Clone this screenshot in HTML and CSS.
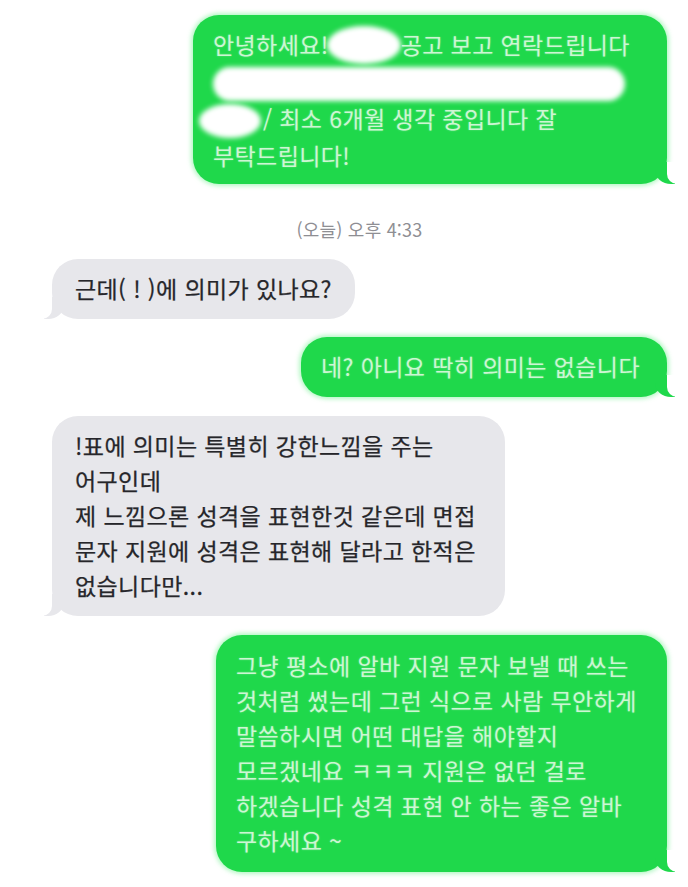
FILE: index.html
```html
<!DOCTYPE html>
<html lang="ko">
<head>
<meta charset="utf-8">
<title>메시지</title>
<link rel="stylesheet" href="styles.css">
</head>
<body>
<div class="chat">
  <div class="msg sent w1">안녕하세요!<span class="redact r1"></span>공고 보고 연락드립니다<br><span class="redact r2"></span><br><span class="redact r3"></span>/ 최소 6개월 생각 중입니다 잘<br>부탁드립니다!</div>
  <div class="time">(오늘) 오후 4:33</div>
  <div class="msg received w2">근데( ! )에 의미가 있나요?</div>
  <div class="msg sent w3">네? 아니요 딱히 의미는 없습니다</div>
  <div class="msg received w4">!표에 의미는 특별히 강한느낌을 주는<br>어구인데<br>제 느낌으론 성격을 표현한것 같은데 면접<br>문자 지원에 성격은 표현해 달라고 한적은<br>없습니다만...</div>
  <div class="msg sent w5">그냥 평소에 알바 지원 문자 보낼 때 쓰는<br>것처럼 썼는데 그런 식으로 사람 무안하게<br>말씀하시면 어떤 대답을 해야할지<br>모르겠네요 ㅋㅋㅋ 지원은 없던 걸로<br>하겠습니다 성격 표현 안 하는 좋은 알바<br>구하세요 ~</div>
</div>
</body>
</html>
```

FILE: styles.css
```css
html, body {
  margin: 0;
  padding: 0;
  background: #ffffff;
}

body {
  font-family: "Noto Sans CJK KR", "Noto Sans", sans-serif;
}

.chat {
  display: flex;
  flex-direction: column;
  padding: 15px 21px 20px 52px;
}

.msg {
  position: relative;
  box-sizing: border-box;
  border-radius: 26px;
  padding: 12px 20px 13px;
  font-size: 23px;
  line-height: 35px;
  white-space: nowrap;
  letter-spacing: 0.4px;
}

.sent {
  align-self: flex-end;
  background: #1fd84b;
  color: #cdf6d3;
  box-shadow: 0 0 4px 2px rgba(120, 240, 150, 0.55);
  text-shadow: 0 0 2px rgba(255, 255, 255, 0.35);
}

.received {
  align-self: flex-start;
  background: #e7e7eb;
  color: #26262a;
  padding-left: 23px;
  -webkit-text-stroke: 0.25px #26262a;
}

/* tails */
.sent::before,
.received::before {
  content: "";
  position: absolute;
  bottom: 0;
  width: 20px;
  height: 22px;
}

.sent::before {
  right: -8px;
  background: #1fd84b;
  border-bottom-left-radius: 16px 14px;
}

.received::before {
  left: -8px;
  background: #e7e7eb;
  border-bottom-right-radius: 16px 14px;
}

.sent::after,
.received::after {
  content: "";
  position: absolute;
  bottom: 0;
  width: 26px;
  height: 22px;
  background: #ffffff;
}

.sent::after {
  right: -26px;
  border-bottom-left-radius: 10px;
}

.received::after {
  left: -26px;
  border-bottom-right-radius: 10px;
}

.w1 { width: 474px; padding-bottom: 11px; }
.w2 { width: 303px; margin-top: 15px; }
.w3 { width: 366px; margin-top: 18px; }
.w4 { width: 453px; margin-top: 19px; }
.w5 { width: 451px; margin-top: 19px; padding-top: 13px; padding-bottom: 14px; }

.time {
  margin-top: 30px;
  text-align: center;
  font-size: 18px;
  line-height: 30px;
  letter-spacing: 0.2px;
  color: #8e8e93;
}

/* redaction scribbles */
.redact {
  display: inline-block;
  vertical-align: middle;
  background: #ffffff;
  filter: blur(2.5px);
  border-radius: 18px;
}

.r1 {
  width: 74px;
  height: 38px;
  margin: -6px 0 0 -2px;
  border-radius: 50%;
}

.r2 {
  width: 412px;
  height: 34px;
  margin-top: -2px;
}

.r3 {
  width: 62px;
  height: 34px;
  margin-left: -14px;
  margin-right: 2px;
  border-radius: 50%;
}
```
